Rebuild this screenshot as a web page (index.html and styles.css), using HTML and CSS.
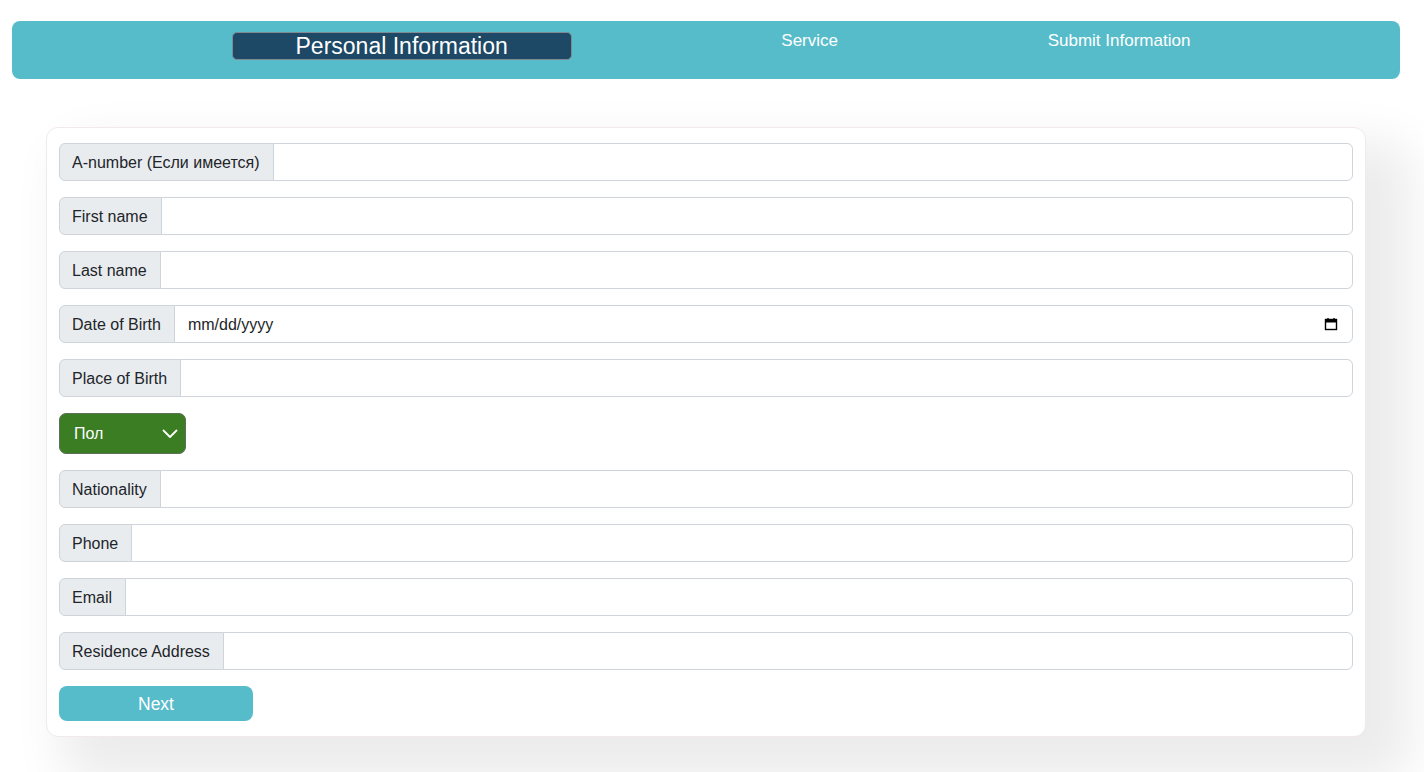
FILE: index.html
```html
<!DOCTYPE html>
<html lang="en">
<head>
<meta charset="utf-8">
<title>Personal Information</title>
<link rel="stylesheet" href="styles.css">
</head>
<body>
<nav class="steps">
  <div class="step step-active">Personal Information</div>
  <div class="step">Service</div>
  <div class="step">Submit Information</div>
</nav>

<main class="card">
  <div class="group"><span class="group-label">A-number (Если имеется)</span><input class="control" type="text"></div>
  <div class="group"><span class="group-label">First name</span><input class="control" type="text"></div>
  <div class="group"><span class="group-label">Last name</span><input class="control" type="text"></div>
  <div class="group"><span class="group-label">Date of Birth</span>
    <div class="control date-control"><span>mm/dd/yyyy</span>
      <svg class="cal-icon" width="14" height="14" viewBox="0 0 14 14" aria-hidden="true">
        <rect x="1.5" y="2.5" width="11" height="10" fill="none" stroke="#000" stroke-width="1.4"/>
        <rect x="1.5" y="2.5" width="11" height="3" fill="#000"/>
        <rect x="3.3" y="1" width="1.4" height="2.5" fill="#000"/>
        <rect x="9.3" y="1" width="1.4" height="2.5" fill="#000"/>
      </svg>
    </div>
  </div>
  <div class="group"><span class="group-label">Place of Birth</span><input class="control" type="text"></div>
  <div class="select-row">
    <div class="gender-select"><span>Пол</span>
      <svg class="chev" width="16" height="10" viewBox="0 0 16 10" aria-hidden="true">
        <path d="M1.5 1.5 L8 8 L14.5 1.5" fill="none" stroke="#fff" stroke-width="1.8" stroke-linecap="round" stroke-linejoin="round"/>
      </svg>
    </div>
  </div>
  <div class="group"><span class="group-label">Nationality</span><input class="control" type="text"></div>
  <div class="group"><span class="group-label">Phone</span><input class="control" type="text"></div>
  <div class="group"><span class="group-label">Email</span><input class="control" type="text"></div>
  <div class="group"><span class="group-label">Residence Address</span><input class="control" type="text"></div>
  <button class="next-btn" type="button">Next</button>
</main>
</body>
</html>
```

FILE: styles.css
```css
* { box-sizing: border-box; }

html, body {
  margin: 0;
  padding: 0;
  background: #ffffff;
  height: 100%;
  overflow: hidden;
}

body {
  font-family: "Liberation Sans", Arial, sans-serif;
  color: #212529;
}

.steps {
  margin: 21px 24px 0 12px;
  height: 58px;
  background: #57bcca;
  border-radius: 8px;
  display: flex;
  justify-content: space-evenly;
  align-items: flex-start;
  padding: 10px 0 0 10px;
}

.step {
  color: #ffffff;
  font-size: 17px;
  line-height: 20px;
  white-space: nowrap;
}

.step-active {
  width: 340px;
  height: 28px;
  margin-top: 1px;
  background: #1d4866;
  border: 1px solid #7f8a93;
  border-radius: 5px;
  font-size: 23px;
  line-height: 26px;
  text-align: center;
}

.card {
  margin: 48px 58px 0 46px;
  background: #ffffff;
  border: 1px solid #f1e9ea;
  border-radius: 12px;
  padding: 15px 12px 15px 12px;
  box-shadow: 30px 30px 50px 15px rgba(0, 0, 0, 0.08);
}

.group {
  display: flex;
  height: 38px;
  margin-bottom: 16px;
}

.group-label {
  display: flex;
  align-items: center;
  padding: 1px 13px 0 12px;
  background: #e9ecef;
  border: 1px solid #ced4da;
  border-radius: 6px 0 0 6px;
  font-size: 16px;
  color: #212529;
  white-space: nowrap;
}

.control {
  flex: 1;
  min-width: 0;
  height: 38px;
  margin: 0 0 0 -1px;
  border: 1px solid #ced4da;
  border-radius: 0 6px 6px 0;
  background: #ffffff;
  font-family: "Liberation Sans", Arial, sans-serif;
  font-size: 16px;
  color: #212529;
  padding: 0 12px;
  outline: none;
}

.date-control {
  display: flex;
  align-items: center;
  justify-content: space-between;
  padding: 1px 14px 0 13px;
}

.cal-icon { display: block; margin-top: -1px; }

.select-row {
  margin-bottom: 16px;
}

.gender-select {
  width: 127px;
  height: 41px;
  background: #3a7d22;
  border: 1px solid #5f6f5a;
  border-radius: 7px;
  display: flex;
  align-items: center;
  justify-content: space-between;
  padding: 1px 7px 0 14px;
  color: #ffffff;
  font-size: 16px;
}

.chev { display: block; }

.next-btn {
  display: block;
  width: 194px;
  height: 35px;
  background: #57bcca;
  border: none;
  border-radius: 8px;
  color: #ffffff;
  font-family: "Liberation Sans", Arial, sans-serif;
  font-size: 17.5px;
  padding: 1px 0 0;
}
```
